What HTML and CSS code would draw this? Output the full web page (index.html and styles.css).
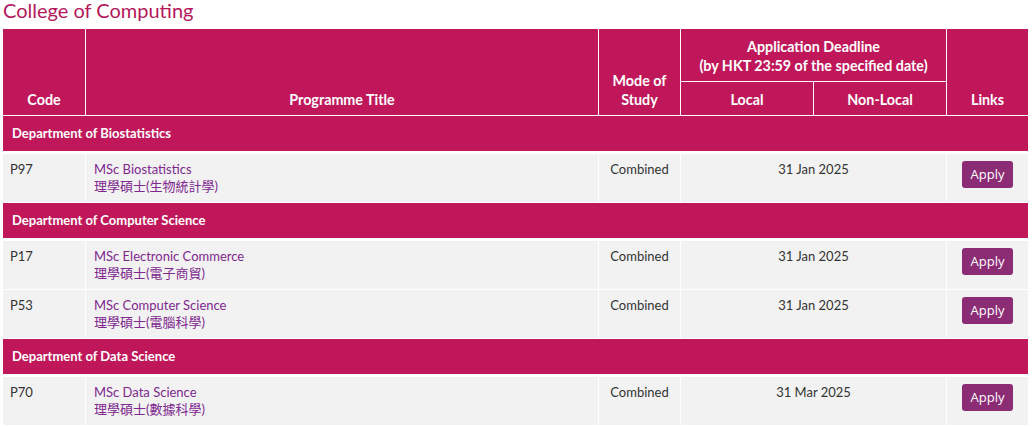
FILE: index.html
```html
<!DOCTYPE html>
<html lang="en">
<head>
<meta charset="utf-8">
<title>College of Computing</title>
<link rel="stylesheet" href="styles.css">
</head>
<body>
<div class="page">
  <h2 class="college">College of Computing</h2>
  <table class="prog">
    <colgroup>
      <col class="c-code">
      <col class="c-title">
      <col class="c-mode">
      <col class="c-local">
      <col class="c-nonlocal">
      <col class="c-links">
    </colgroup>
    <thead>
      <tr>
        <th rowspan="2" class="hb">Code</th>
        <th rowspan="2" class="hb">Programme Title</th>
        <th rowspan="2" class="hb">Mode of<br>Study</th>
        <th colspan="2" class="hd">Application Deadline<br>(by HKT 23:59 of the specified date)</th>
        <th rowspan="2" class="hb last">Links</th>
      </tr>
      <tr>
        <th class="hs">Local</th>
        <th class="hs">Non-Local</th>
      </tr>
    </thead>
    <tbody>
      <tr class="dept"><td colspan="6">Department of Biostatistics</td></tr>
      <tr class="row">
        <td class="code">P97</td>
        <td class="title"><a href="#"><span class="ln">MSc Biostatistics</span><span class="ln zh" lang="zh-Hant">理學碩士(生物統計學)</span></a></td>
        <td class="mode">Combined</td>
        <td class="date" colspan="2">31 Jan 2025</td>
        <td class="links"><a class="apply" href="#">Apply</a></td>
      </tr>
      <tr class="dept"><td colspan="6">Department of Computer Science</td></tr>
      <tr class="row">
        <td class="code">P17</td>
        <td class="title"><a href="#"><span class="ln">MSc Electronic Commerce</span><span class="ln zh" lang="zh-Hant">理學碩士(電子商貿)</span></a></td>
        <td class="mode">Combined</td>
        <td class="date" colspan="2">31 Jan 2025</td>
        <td class="links"><a class="apply" href="#">Apply</a></td>
      </tr>
      <tr class="row">
        <td class="code">P53</td>
        <td class="title"><a href="#"><span class="ln">MSc Computer Science</span><span class="ln zh" lang="zh-Hant">理學碩士(電腦科學)</span></a></td>
        <td class="mode">Combined</td>
        <td class="date" colspan="2">31 Jan 2025</td>
        <td class="links"><a class="apply" href="#">Apply</a></td>
      </tr>
      <tr class="dept"><td colspan="6">Department of Data Science</td></tr>
      <tr class="row">
        <td class="code">P70</td>
        <td class="title"><a href="#"><span class="ln">MSc Data Science</span><span class="ln zh" lang="zh-Hant">理學碩士(數據科學)</span></a></td>
        <td class="mode">Combined</td>
        <td class="date" colspan="2">31 Mar 2025</td>
        <td class="links"><a class="apply" href="#">Apply</a></td>
      </tr>
    </tbody>
  </table>
</div>
</body>
</html>
```

FILE: styles.css
```css
html, body {
  margin: 0;
  padding: 0;
  background: #ffffff;
}

body {
  font-family: Lato, "Noto Sans CJK TC", sans-serif;
  color: #333333;
}

.page {
  padding: 0 4px 0 3px;
}

.college {
  margin: 0 0 9px 0;
  font-size: 20px;
  line-height: 20px;
  font-weight: 400;
  color: #b5175b;
}

.prog {
  width: 1025px;
  table-layout: fixed;
  border-collapse: separate;
  border-spacing: 0;
  font-size: 13px;
}

.c-code { width: 83px; }
.c-title { width: 513px; }
.c-mode { width: 82px; }
.c-local { width: 133px; }
.c-nonlocal { width: 133px; }
.c-links { width: 81px; }

.prog th {
  background: #c0175a;
  color: #ffffff;
  font-size: 14.3px;
  font-weight: 700;
  text-align: center;
  line-height: 19px;
  padding: 8px 2px 6px 2px;
  border-right: 1px solid #ffffff;
  border-bottom: 1px solid #ffffff;
}

.prog th.last {
  border-right: 0;
}

.prog th.hb {
  vertical-align: bottom;
}

.prog th.hd,
.prog th.hs {
  vertical-align: middle;
}

.dept td {
  background: #c0175a;
  color: #ffffff;
  font-weight: 700;
  line-height: 19px;
  padding: 8px 9px;
  border-bottom: 3px solid #ffffff;
}

.row td {
  background: #f2f2f2;
  line-height: 17px;
  padding: 7px 7px 7px 7px;
  vertical-align: top;
  border-right: 1px solid #ffffff;
  border-bottom: 1px solid #ffffff;
}

.row td.title {
  padding-left: 8px;
}

.row td.links {
  border-right: 0;
  text-align: center;
}

.row td.mode,
.row td.date {
  text-align: center;
}

.title a {
  display: block;
  color: #80288f;
  text-decoration: none;
}

.ln {
  display: block;
  height: 17px;
  line-height: 17px;
  overflow: visible;
  white-space: nowrap;
}

.apply {
  display: inline-block;
  vertical-align: top;
  background: #8b2c74;
  color: #ffffff;
  font-family: "Open Sans", sans-serif;
  font-size: 13px;
  line-height: 17px;
  padding: 5px 9px;
  border-radius: 3px;
  text-decoration: none;
}
```
